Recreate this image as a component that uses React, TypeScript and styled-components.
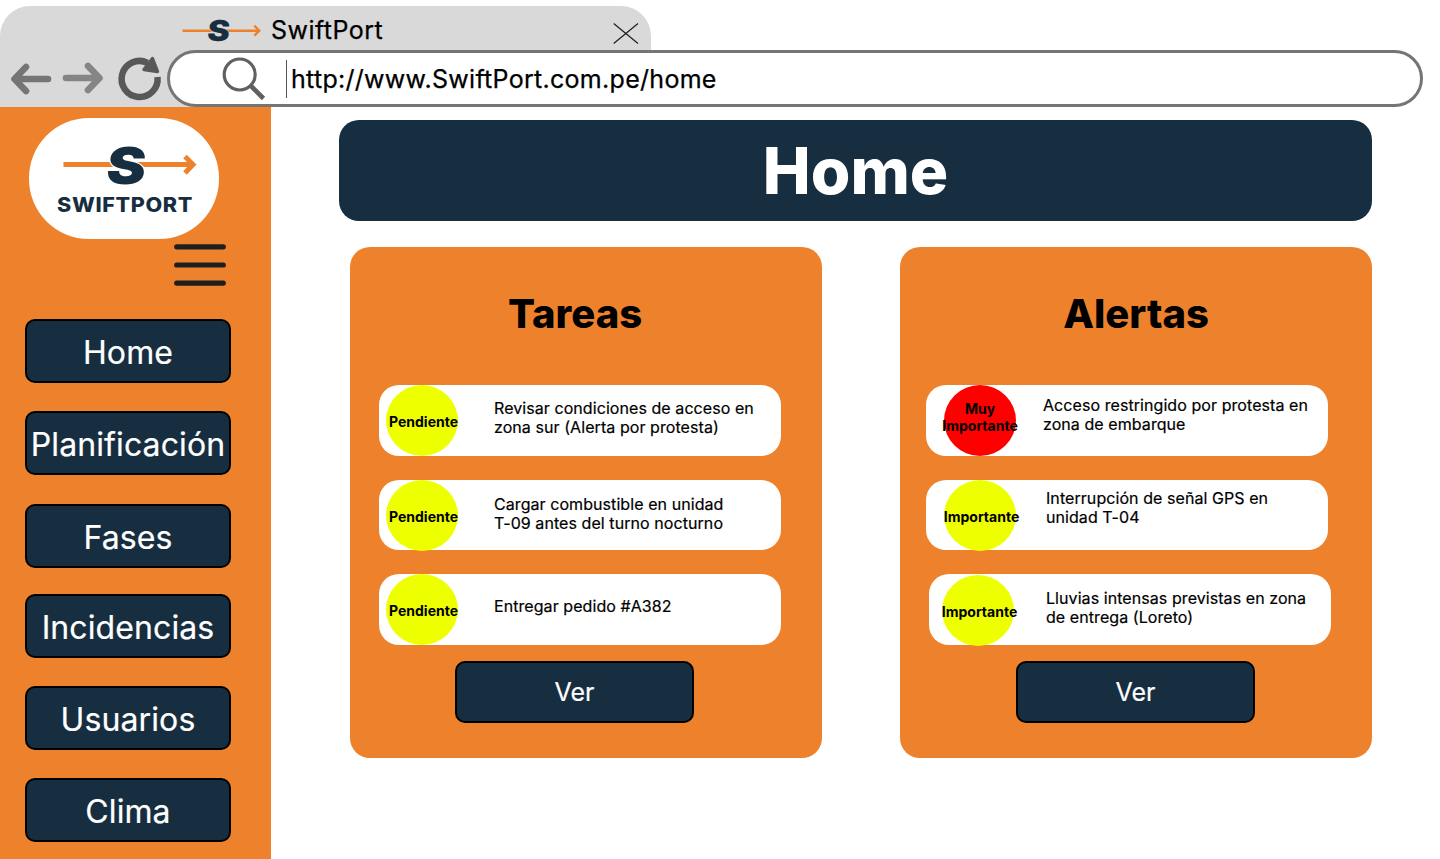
import React from "react";
import styled, { createGlobalStyle } from "styled-components";

const navy = "#172e40";
const orange = "#ee822c";

const GlobalStyle = createGlobalStyle`
  * { box-sizing: border-box; }
  body { margin: 0; background: #fff; overflow: hidden; font-family: Inter, "Liberation Sans", sans-serif; color: #000; }
  h1, h2, p { margin: 0; }
  button { font-family: inherit; }
  svg { display: block; flex: none; }
`;

const Page = styled.div`
  width: 1440px;
  height: 859px;
  display: flex;
  flex-direction: column;
  overflow: hidden;
`;

const Browser = styled.header`
  height: 107px;
  padding-top: 6px;
  display: flex;
  flex-direction: column;
`;

const Tab = styled.div`
  width: 651px;
  height: 44px;
  padding: 0 12px 0 181px;
  display: flex;
  align-items: center;
  background: #d9d9d9;
  border-radius: 30px 30px 0 0;
`;

const TabTitle = styled.span`
  margin-left: 10px;
  padding-bottom: 1px;
  flex: 1;
  font-size: 25px;
  line-height: 30px;
  letter-spacing: 0.48px;
  -webkit-text-stroke: 0.25px #000;
  margin-top: 5px;
`;

const AddressRow = styled.div`
  height: 57px;
  display: flex;
  align-items: center;
  background: linear-gradient(to right, #d9d9d9 651px, transparent 651px);
`;

const Controls = styled.div`
  width: 167px;
  height: 57px;
`;

const AddressBar = styled.div`
  width: 1256px;
  height: 57px;
  padding-left: 51px;
  display: flex;
  align-items: center;
  background: #fff;
  border: 3px solid #757575;
  border-radius: 29px;
`;

const Caret = styled.span`
  width: 1px;
  height: 38px;
  margin: 0 4px 0 19px;
  background: #555;
`;

const Url = styled.span`
  font-size: 25px;
  line-height: 30px;
  letter-spacing: 0.29px;
  -webkit-text-stroke: 0.25px #000;
`;

const Body = styled.div`
  flex: 1;
  display: flex;
`;

const Sidebar = styled.aside`
  width: 271px;
  height: 752px;
  padding-top: 11px;
  background: ${orange};
  display: flex;
  flex-direction: column;
`;

const LogoPill = styled.div`
  width: 190px;
  height: 121px;
  margin-left: 29px;
  background: #fff;
  border-radius: 60px;
`;

const MenuToggle = styled.button`
  width: 52px;
  height: 42px;
  margin: 5px 0 33px 174px;
  padding: 0;
  border: 0;
  background: none;
`;

const Nav = styled.nav`
  padding-left: 25px;
  display: flex;
  flex-direction: column;
`;

const DarkButton = styled.button`
  padding: 0;
  display: flex;
  align-items: center;
  justify-content: center;
  color: #fff;
  background: ${navy};
  border: 2px solid #000;
  border-radius: 10px;
  white-space: nowrap;
`;

const NavButton = styled(DarkButton)<{ $gap: number }>`
  width: 206px;
  height: 64px;
  margin-bottom: ${(p) => p.$gap}px;
  padding-top: 3px;
  font-size: 32px;
  line-height: 39px;
  letter-spacing: 0.1px;
  -webkit-text-stroke: 0.2px #fff;
`;

const ViewButton = styled(DarkButton)<{ $left: number }>`
  width: 239px;
  height: 62px;
  margin: 16px 0 0 ${(p) => p.$left}px;
  font-size: 25px;
  line-height: 30px;
  -webkit-text-stroke: 0.2px #fff;
`;

const Main = styled.main`
  width: 1101px;
  margin-left: 68px;
  padding-top: 13px;
`;

const Banner = styled.h1`
  width: 1033px;
  height: 101px;
  display: flex;
  align-items: center;
  justify-content: center;
  background: ${navy};
  color: #fff;
  border-radius: 20px;
  font-size: 64px;
  font-weight: 800;
`;

const Panels = styled.div`
  display: flex;
  gap: 78px;
  margin: 26px 0 0 11px;
`;

const Panel = styled.section`
  width: 472px;
  height: 511px;
  background: ${orange};
  border-radius: 20px;
`;

const PanelTitle = styled.h2<{ $shift: number }>`
  height: 138px;
  padding: 43px ${(p) => p.$shift}px 0 0;
  font-size: 40px;
  line-height: 48px;
  font-weight: 800;
  text-align: center;
`;

const List = styled.div<{ $left: number }>`
  height: 260px;
  padding-left: ${(p) => p.$left}px;
  display: flex;
  flex-direction: column;
  justify-content: space-between;
`;

const Item = styled.article<{ $h: number; $indent: number; $pad: number }>`
  width: 402px;
  height: ${(p) => p.$h}px;
  margin-left: ${(p) => p.$indent}px;
  padding-left: ${(p) => p.$pad}px;
  display: flex;
  background: #fff;
  border-radius: 20px;
`;

const Badge = styled.div<{ $color: string; $drop: number; $nudge: number; $lift: number }>`
  width: 72px;
  height: 71px;
  flex: none;
  margin-top: ${(p) => p.$drop}px;
  padding: 1px 0 ${(p) => p.$lift}px ${(p) => p.$nudge}px;
  display: flex;
  align-items: center;
  justify-content: center;
  background: ${(p) => p.$color};
  border-radius: 50%;
  font-size: 14px;
  line-height: 17px;
  font-weight: 700;
  text-align: center;
`;

const ItemText = styled.p<{ $left: number; $top: number }>`
  margin: ${(p) => p.$top}px 0 0 ${(p) => p.$left}px;
  font-size: 16px;
  line-height: 19px;
  letter-spacing: 0.07px;
  -webkit-text-stroke: 0.2px #000;
  white-space: pre-line;
`;

interface Entry {
  badge: string;
  color: string;
  text: string;
  height: number;
  indent: number;
  pad: number;
  drop: number;
  nudge: number;
  lift: number;
  left: number;
  top: number;
}

const yellow = "#eeff00";

const tasks: Entry[] = [
  { badge: "Pendiente", color: yellow, text: "Revisar condiciones de acceso en\nzona sur (Alerta por protesta)", height: 71, indent: 0, pad: 7, drop: 0, nudge: 3, lift: 0, left: 36, top: 14 },
  { badge: "Pendiente", color: yellow, text: "Cargar combustible en unidad\nT-09 antes del turno nocturno", height: 70, indent: 0, pad: 7, drop: 0, nudge: 3, lift: 0, left: 36, top: 15 },
  { badge: "Pendiente", color: yellow, text: "Entregar pedido #A382", height: 71, indent: 0, pad: 7, drop: 0, nudge: 3, lift: 0, left: 36, top: 23 },
];

const alerts: Entry[] = [
  { badge: "Muy\nImportante", color: "#ff0000", text: "Acceso restringido por protesta en\nzona de embarque", height: 71, indent: 0, pad: 18, drop: 0, nudge: 0, lift: 8, left: 27, top: 11 },
  { badge: "Importante", color: yellow, text: "Interrupción de señal GPS en\nunidad T-04", height: 70, indent: 0, pad: 18, drop: 0, nudge: 3, lift: 0, left: 30, top: 9 },
  { badge: "Importante", color: yellow, text: "Lluvias intensas previstas en zona\nde entrega (Loreto)", height: 71, indent: 3, pad: 13, drop: 1, nudge: 3, lift: 0, left: 32, top: 15 },
];

const BadgeLabel = styled.span`
  white-space: pre;
`;

function Entries({ items }: { items: Entry[] }) {
  return (
    <>
      {items.map((e, i) => (
        <Item key={i} $h={e.height} $indent={e.indent} $pad={e.pad}>
          <Badge $color={e.color} $drop={e.drop} $nudge={e.nudge} $lift={e.lift}>
            <BadgeLabel>{e.badge}</BadgeLabel>
          </Badge>
          <ItemText $left={e.left} $top={e.top}>{e.text}</ItemText>
        </Item>
      ))}
    </>
  );
}

function TabLogo() {
  return (
    <svg width="80" height="44" viewBox="181 6 80 44">
      <path d="M182.500 30.700H259M254.300 25.700l5 5-5 5" fill="none" stroke={orange} strokeWidth="2.400" />
      <text transform="translate(206.600 41) skewX(-6) scale(1.16 1)" fontFamily="Inter" fontSize="29" fontWeight="900" fill={navy} stroke="#d9d9d9" strokeWidth="1" paintOrder="stroke">S</text>
    </svg>
  );
}

function Logo() {
  return (
    <svg width="190" height="121" viewBox="29 118 190 121">
      <path d="M63.500 164.500H192" fill="none" stroke={orange} strokeWidth="5" />
      <path d="M185 156.500l8 8-8 8.500" fill="none" stroke={orange} strokeWidth="5" />
      <text transform="translate(105 183.500) skewX(-6) scale(1.16 1)" fontFamily="Inter" fontSize="51" fontWeight="900" fill={navy} stroke="#fff" strokeWidth="2" paintOrder="stroke">S</text>
      <text x="57" y="211.700" textLength="136" lengthAdjust="spacingAndGlyphs" fontFamily="Inter" fontSize="20" fontWeight="800" letterSpacing="0.600" fill={navy}>SWIFTPORT</text>
    </svg>
  );
}

function ControlIcons() {
  return (
    <svg width="167" height="57" viewBox="0 50 167 57" fill="none" strokeLinecap="round" strokeLinejoin="round">
      <path d="M26 67L14.500 79 26 91M15 79H48" stroke="#757575" strokeWidth="6.600" />
      <path d="M88 66l11.500 12L88 90M66 78H98" stroke="#858585" strokeWidth="6.600" />
      <path d="M157.500 77A18 18 0 1 1 147.500 62.800" stroke="#585856" strokeWidth="6.500" strokeLinecap="butt" />
      <path d="M152.500 58.500L157.500 71.500 144 69.500Z" fill="#585856" stroke="#585856" strokeWidth="3.400" />
    </svg>
  );
}

function SearchIcon() {
  return (
    <svg width="46" height="46" viewBox="221 55 46 46" fill="none" stroke="#606060">
      <circle cx="239.700" cy="73.500" r="15.500" strokeWidth="3.200" />
      <path d="M250 84L263.500 97.500" strokeWidth="4.600" />
    </svg>
  );
}

export default function App() {
  return (
    <Page>
      <GlobalStyle />
      <Browser>
        <Tab>
          <TabLogo />
          <TabTitle>SwiftPort</TabTitle>
          <svg width="26" height="32" viewBox="0 0 26 32">
            <path d="M.7 11.500L25 31.500M25 11.500L.7 31.500" stroke="#1e1e1e" strokeWidth="1.200" />
          </svg>
        </Tab>
        <AddressRow>
          <Controls><ControlIcons /></Controls>
          <AddressBar>
            <SearchIcon />
            <Caret />
            <Url>http://www.SwiftPort.com.pe/home</Url>
          </AddressBar>
        </AddressRow>
      </Browser>
      <Body>
        <Sidebar>
          <LogoPill><Logo /></LogoPill>
          <MenuToggle aria-label="Menú">
            <svg width="52" height="42" viewBox="0 0 52 42">
              <path d="M2.700 2.800H49.300M2.700 21H49.300M2.700 39.100H49.300" stroke="#1e1e1e" strokeWidth="5.200" strokeLinecap="round" />
            </svg>
          </MenuToggle>
          <Nav>
            <NavButton $gap={28}>Home</NavButton>
            <NavButton $gap={29}>Planificación</NavButton>
            <NavButton $gap={26}>Fases</NavButton>
            <NavButton $gap={28}>Incidencias</NavButton>
            <NavButton $gap={28}>Usuarios</NavButton>
            <NavButton $gap={0}>Clima</NavButton>
          </Nav>
        </Sidebar>
        <Main>
          <Banner>Home</Banner>
          <Panels>
            <Panel>
              <PanelTitle $shift={22}>Tareas</PanelTitle>
              <List $left={29}><Entries items={tasks} /></List>
              <ViewButton $left={105}>Ver</ViewButton>
            </Panel>
            <Panel>
              <PanelTitle $shift={0}>Alertas</PanelTitle>
              <List $left={26}><Entries items={alerts} /></List>
              <ViewButton $left={116}>Ver</ViewButton>
            </Panel>
          </Panels>
        </Main>
      </Body>
    </Page>
  );
}
